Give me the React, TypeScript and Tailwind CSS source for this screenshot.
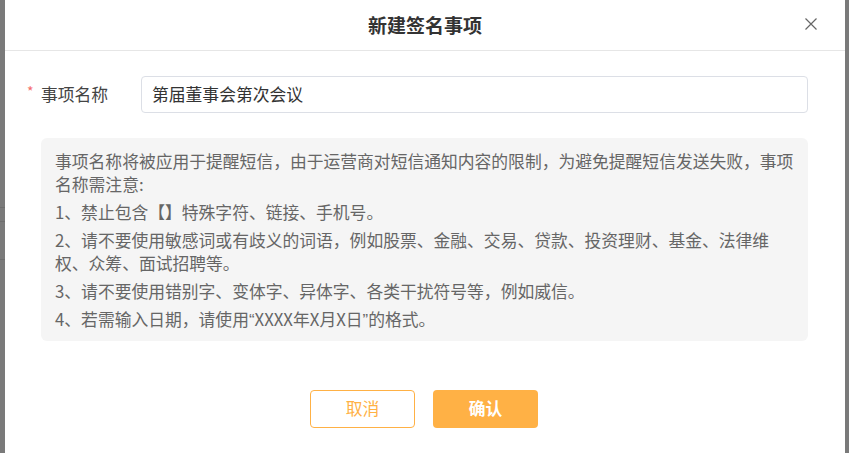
import React from "react";

const font = "font-['Microsoft_YaHei','Noto_Sans_CJK_SC',sans-serif]";

export default function App() {
  const Q = ({ c }: { c: string }) => (
    <span className="font-['Liberation_Sans',sans-serif]">{c}</span>
  );
  const lines: React.ReactNode[] = [
    "事项名称将被应用于提醒短信，由于运营商对短信通知内容的限制，为避免提醒短信发送失败，事项名称需注意:",
    "1、禁止包含【】特殊字符、链接、手机号。",
    "2、请不要使用敏感词或有歧义的词语，例如股票、金融、交易、贷款、投资理财、基金、法律维权、众筹、面试招聘等。",
    "3、请不要使用错别字、变体字、异体字、各类干扰符号等，例如威信。",
    <>
      4、若需输入日期，请使用<Q c="“" />XXXX年X月X日<Q c="”" />的格式。
    </>,
  ];
  return (
    <div className={`w-[849px] h-[453px] overflow-hidden bg-[#7a7a7a] flex ${font}`}>
      <div className="w-[5px] shrink-0 flex flex-col">
        <div className="h-[207px]" />
        <div className="h-px bg-[#6e6e6e]" />
        <div className="h-[13px]" />
        <div className="h-px bg-[#6e6e6e]" />
        <div className="h-[37px]" />
        <div className="h-px bg-[#6e6e6e]" />
      </div>
      <div className="w-[840px] shrink-0 bg-white flex flex-col">
        <div className="h-[51px] border-b border-[#e6e6e6] flex items-center justify-center relative">
          <span className="text-[19px] font-bold text-[#333] leading-none -mt-[1px]">新建签名事项</span>
          <svg
            className="absolute left-[800px] top-[18px]"
            width="12"
            height="12"
            viewBox="0 0 12 12"
            fill="none"
            stroke="#666"
            strokeWidth="1.2"
          >
            <path d="M0.5 0.5L11.5 11.5M11.5 0.5L0.5 11.5" />
          </svg>
        </div>
        <div className="flex items-center mt-[25px] h-[37px]">
          <div className="w-[136px] flex items-center pl-[22px]">
            <span className="text-[#f56c6c] text-[14px] w-[14px] -mt-[6px]">*</span>
            <span className="text-[16.8px] text-[#444]">事项名称</span>
          </div>
          <div className="w-[667px] h-[37px] border border-[#dcdfe6] rounded-[4px] flex items-center pl-[10px] text-[16.8px] text-[#333]">
            第届董事会第次会议
          </div>
        </div>
        <div className="ml-[36px] mt-[25px] w-[767px] h-[203px] bg-[#f5f5f5] rounded-[6px] pt-[12px] pb-[10px] pl-[14px] pr-[8px] flex flex-col gap-[5px]">
          {lines.map((l, i) => (
            <p key={i} className="text-[16.8px] leading-[23px] text-[#666] m-0">
              {l}
            </p>
          ))}
        </div>
        <div className="mt-[49px] flex justify-center gap-[18px] pr-[2px]">
          <button className="w-[105px] h-[38px] border border-[#ffb145] rounded-[4px] text-[#ffb145] text-[16.8px] bg-white">
            取消
          </button>
          <button className="w-[105px] h-[38px] rounded-[4px] bg-[#ffb145] text-white text-[16.8px] font-bold">
            确认
          </button>
        </div>
      </div>
      <div className="w-[4px] shrink-0 bg-[#7a7a7a]" />
    </div>
  );
}
